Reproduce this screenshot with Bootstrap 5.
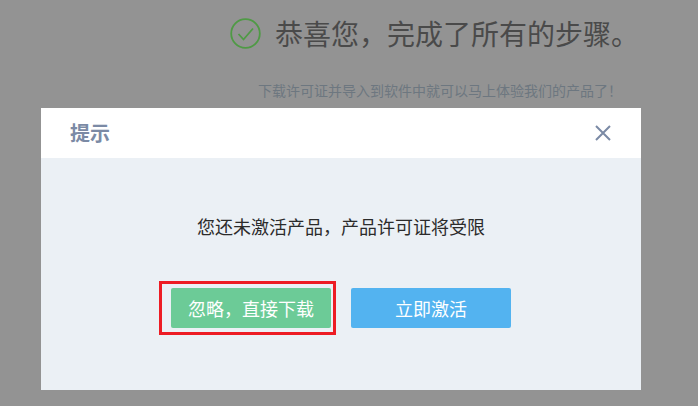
<!DOCTYPE html>
<html lang="zh">
<head>
<meta charset="utf-8">
<title>提示</title>
<link rel="stylesheet" href="https://cdn.jsdelivr.net/npm/bootstrap@5.3.0/dist/css/bootstrap.min.css">
<style>
html,body{height:406px;overflow:hidden}
body{background:#939393;font-family:"Noto Sans CJK SC","Liberation Sans",sans-serif;position:relative}
.page-head{padding:15px 59px 0 0;height:108px}
.head-row{gap:14px}
.done-title{font-size:28px;line-height:36px;color:#4a4a4a;margin:0;font-weight:400}
.done-sub{font-size:14px;line-height:20px;color:#6d7780;margin:29px 17px 0 0}
.done-icon{width:31px;height:31px;flex:none}
.dlg{position:absolute;left:41px;top:108px;width:600px;height:282px;border:0;border-radius:0;background:#ebf0f5}
.dlg-head{height:50px;background:#fff;padding:0 29px;border:0;border-radius:0}
.dlg-title{font-size:20px;font-weight:700;color:#7b8aa5;margin:0;line-height:50px}
.dlg-close{background:none;border:0;padding:0;width:18px;height:18px;line-height:0}
.dlg-msg{font-size:18px;line-height:26px;color:#2b2b2b;margin:0;padding-top:55px;text-align:center}
.dlg-btns{padding-top:49px;padding-left:130px}
.mark-box{border:3px solid #ed1c24;padding:4px 2px 4px 9px;margin:-7px 15px -7px -12px}
.act{width:160px;height:40px;border:0;border-radius:2px;color:#fff;font-size:18px;line-height:40px;padding:0}
.act-green{background:#6ccb97}
.act-blue{background:#53b3f0}
</style>
</head>
<body>
<header class="page-head d-flex flex-column align-items-end">
  <div class="head-row d-flex align-items-center">
    <svg class="done-icon" viewBox="0 0 31 31" aria-hidden="true"><circle cx="15.5" cy="15.5" r="14.3" fill="none" stroke="#4f9a45" stroke-width="1.8"/><path d="M8.5 16l5 5.5 9.5-11" fill="none" stroke="#4f9a45" stroke-width="1.8"/></svg>
    <h1 class="done-title">恭喜您&#65292;完成了所有的步骤。</h1>
  </div>
  <p class="done-sub">下载许可证并导入到软件中就可以马上体验我们的产品了&#65281;</p>
</header>
<div class="modal-content dlg">
  <div class="modal-header dlg-head d-flex justify-content-between align-items-center">
    <h5 class="dlg-title">提示</h5>
    <button type="button" class="dlg-close" aria-label="关闭"><svg width="18" height="18" viewBox="0 0 18 18"><path d="M2 2l14 14M16 2L2 16" stroke="#7b8aa5" stroke-width="2" fill="none"/></svg></button>
  </div>
  <div class="modal-body p-0">
    <p class="dlg-msg">您还未激活产品&#65292;产品许可证将受限</p>
    <div class="dlg-btns d-flex align-items-center">
      <div class="mark-box d-flex"><button type="button" class="btn act act-green">忽略&#65292;直接下载</button></div>
      <button type="button" class="btn act act-blue">立即激活</button>
    </div>
  </div>
</div>
<script src="https://cdn.jsdelivr.net/npm/bootstrap@5.3.0/dist/js/bootstrap.bundle.min.js"></script>
</body>
</html>
